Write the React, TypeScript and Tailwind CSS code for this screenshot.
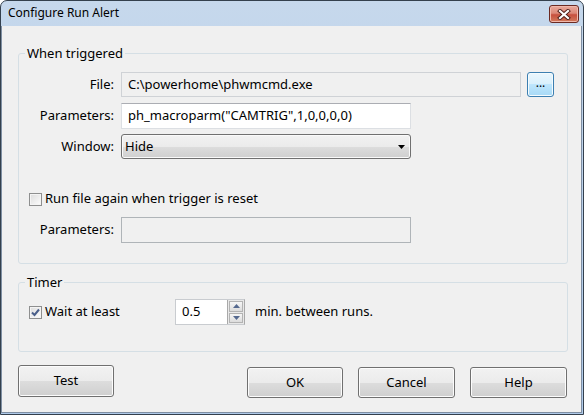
const btn =
  'flex items-center justify-center rounded-[3px] border border-[#707070] bg-[linear-gradient(to_bottom,#f2f2f2_0%,#ebebeb_50%,#dddddd_50%,#cfcfcf_100%)] shadow-[inset_0_0_0_1px_#fcfcfc] text-black';

function CheckBox({ checked }: { checked?: boolean }) {
  return (
    <span className="flex h-[13px] w-[13px] items-center justify-center border border-[#8e8f8f] bg-[linear-gradient(135deg,#dcdcdc,#fdfdfd)] shadow-[inset_0_0_0_1px_#f4f4f4]">
      {checked && (
        <svg width="9" height="9" viewBox="0 0 9 9">
          <path d="M1 4.5 L3.5 7 L8 1.5" fill="none" stroke="#4a5f8a" strokeWidth="2" />
        </svg>
      )}
    </span>
  );
}

export default function App() {
  return (
    <div className="relative h-[417px] w-[586px] overflow-hidden bg-white text-[13px] text-black [font-family:'Noto_Sans',sans-serif]">
      <div className="flex h-[415px] w-[584px] flex-col rounded-t-[7px] border border-[#34404d] bg-[linear-gradient(to_bottom,#c6d8ec,#afcaea)]">
        {/* title bar */}
        <div className="flex h-[25px] items-start justify-between pl-[7px] pr-[4px]">
          <span className="mt-[4px] text-[12px] leading-[16px]">Configure Run Alert</span>
          <button className="mt-[4px] flex h-[18px] w-[30px] items-center justify-center rounded-[3px] border border-[#6b2a22] bg-[linear-gradient(to_bottom,#e9a99b_0%,#dc8878_45%,#c7503e_55%,#d27a5c_100%)] shadow-[inset_0_0_0_1px_#f0b8ab]">
            <svg width="14" height="11" viewBox="0 0 14 11">
              <path d="M3 2 L11 9 M11 2 L3 9" stroke="#4d1d17" strokeWidth="4" strokeLinecap="square" />
              <path d="M3 2 L11 9 M11 2 L3 9" stroke="#ffffff" strokeWidth="2.2" strokeLinecap="square" />
            </svg>
          </button>
        </div>

        {/* client area */}
        <div className="mb-[1px] mr-[1px] flex flex-1 flex-col border border-t-0 border-[#7f8fa3] bg-[#f0f0f0] pl-[16px] pr-[13px] pt-[18px]">
          <fieldset className="rounded-[3px] border border-[#d5dfe5]">
            <legend className="ml-[6px] px-[2px] leading-[18px]">When triggered</legend>
            <div className="flex flex-col pb-[20px] pt-[10px]">
              <div className="flex h-[25px] items-center">
                <span className="w-[95px] text-right">File:</span>
                <div className="ml-[7px] flex h-[25px] w-[400px] items-center border border-[#cfd2d6] bg-[#f0f0f0] px-[6px]">
                  C:\powerhome\phwmcmd.exe
                </div>
                <button className="ml-[6px] flex h-[25px] w-[27px] items-center justify-center rounded-[3px] border border-[#3c7fb1] bg-[linear-gradient(to_bottom,#eaf6fd_0%,#d9f0fc_50%,#bee6fd_50%,#a7d9f5_100%)] pb-[4px] text-[12px] shadow-[inset_0_0_0_1px_#f4fbfe]">
                  ...
                </button>
              </div>
              <div className="mt-[6px] flex h-[26px] items-center">
                <span className="w-[95px] text-right">Parameters:</span>
                <div className="ml-[7px] flex h-[26px] w-[290px] items-center border border-[#dcdfe3] border-t-[#abadb3] bg-white px-[6px]">
                  ph_macroparm("CAMTRIG",1,0,0,0,0)
                </div>
              </div>
              <div className="mt-[5px] flex h-[25px] items-center">
                <span className="w-[95px] text-right">Window:</span>
                <div className="ml-[7px] flex h-[25px] w-[290px] items-center justify-between rounded-[3px] border border-[#707070] bg-[linear-gradient(to_bottom,#f2f2f2_0%,#ebebeb_50%,#dddddd_50%,#cfcfcf_100%)] pl-[3px] pr-[5px] shadow-[inset_0_0_0_1px_#fafafa]">
                  <span>Hide</span>
                  <svg width="7" height="4" viewBox="0 0 7 4">
                    <path d="M0 0 H7 L3.5 4 Z" fill="#000" />
                  </svg>
                </div>
              </div>
              <label className="mt-[31px] flex h-[18px] items-center gap-[3px] pl-[10px]">
                <CheckBox />
                <span>Run file again when trigger is reset</span>
              </label>
              <div className="mt-[9px] flex h-[26px] items-center">
                <span className="w-[95px] text-right">Parameters:</span>
                <div className="ml-[7px] h-[26px] w-[290px] border border-[#afb4b8] bg-[#f0f0f0]" />
              </div>
            </div>
          </fieldset>

          <fieldset className="mt-[9px] rounded-[3px] border border-[#d5dfe5]">
            <legend className="ml-[6px] px-[2px] leading-[18px]">Timer</legend>
            <div className="flex items-center pb-[26px] pl-[10px] pt-[8px]">
              <label className="flex w-[146px] items-center gap-[3px]">
                <CheckBox checked />
                <span>Wait at least</span>
              </label>
              <div className="flex h-[26px] w-[70px] items-stretch border border-[#c9ccd0] border-r-[#a9a9a9] bg-white">
                <span className="flex-1 pl-[6px] leading-[22px]">0.5</span>
                <div className="flex w-[17px] flex-col gap-[1px] border-l border-[#a9a9a9] bg-[#e8e8e8] p-[1px]">
                  <span className="flex flex-1 items-center justify-center border border-[#b3b3b3] bg-[linear-gradient(to_bottom,#f6f6f6,#dcdcdc)]">
                    <svg width="7" height="4" viewBox="0 0 7 4">
                      <path d="M0 4 H7 L3.5 0 Z" fill="#55698f" />
                    </svg>
                  </span>
                  <span className="flex flex-1 items-center justify-center border border-[#b3b3b3] bg-[linear-gradient(to_bottom,#f6f6f6,#dcdcdc)]">
                    <svg width="7" height="4" viewBox="0 0 7 4">
                      <path d="M0 0 H7 L3.5 4 Z" fill="#55698f" />
                    </svg>
                  </span>
                </div>
              </div>
              <span className="ml-[10px]">min. between runs.</span>
            </div>
          </fieldset>

          <div className="mt-[13px] flex items-start pr-[1px]">
            <button className={`${btn} h-[32px] w-[96px]`}>Test</button>
            <div className="flex-1" />
            <div className="mt-[2px] flex gap-[15px]">
              <button className={`${btn} h-[31px] w-[96px]`}>OK</button>
              <button className={`${btn} h-[31px] w-[97px]`}>Cancel</button>
              <button className={`${btn} h-[31px] w-[97px]`}>Help</button>
            </div>
          </div>
        </div>
      </div>
    </div>
  );
}
